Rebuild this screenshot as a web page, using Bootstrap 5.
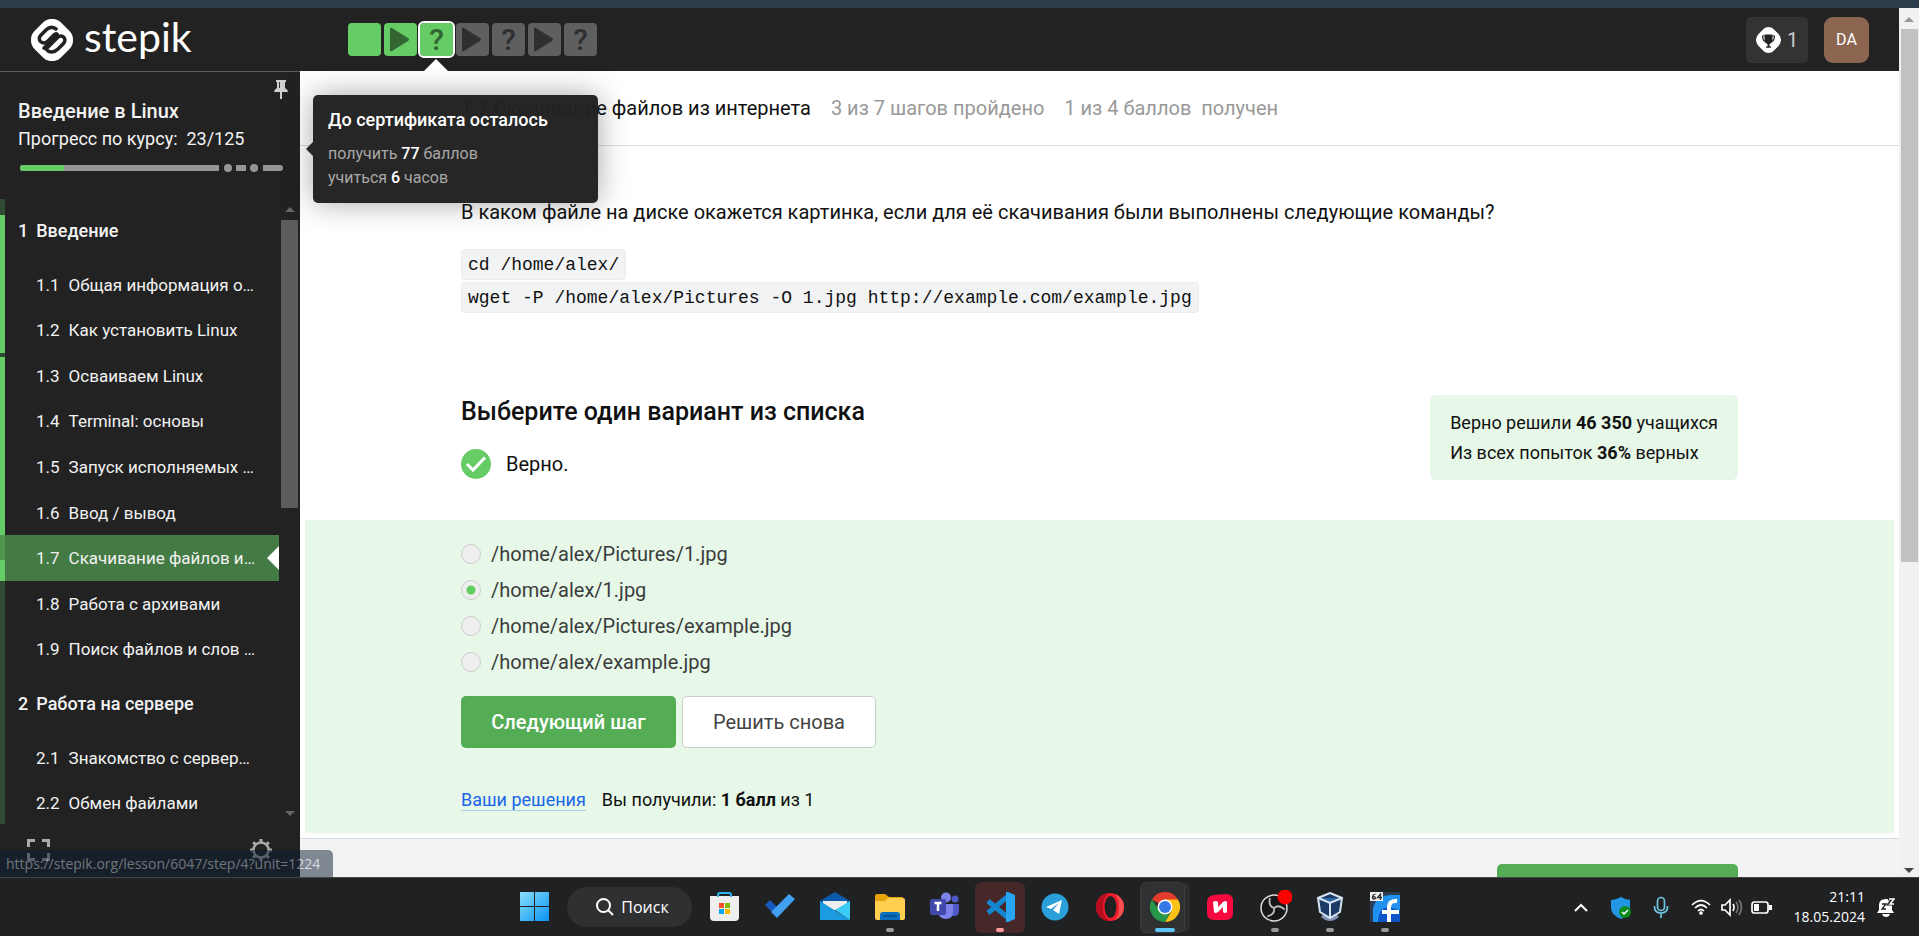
<!DOCTYPE html>
<html lang="ru">
<head>
<meta charset="utf-8">
<meta name="viewport" content="width=device-width, initial-scale=1">
<title>Скачивание файлов из интернета — Stepik</title>
<link rel="stylesheet" href="https://cdn.jsdelivr.net/npm/bootstrap@5.3.0/dist/css/bootstrap.min.css">
<style>
:root { --ink:#222; --green:#66cc66; --mint:#e7f8e8; }
body { font-family:Roboto,"Liberation Sans",sans-serif; font-size:20px; line-height:30px; color:#111; background:#fff; }
button { font-family:inherit; }
.shell { height:100vh; overflow:hidden; }
.strip { height:8px; background:#2c3c4b; }
.topbar { height:63px; background:var(--ink); padding:0 30px 0 31px; }
.brand-link { width:317px; gap:11px; color:#fff; font:400 41px/44px Lato,sans-serif; text-decoration:none; }
.brand-link span { padding-bottom:6px; }
.step-row { gap:3px; padding-top:15px; }
.step { width:33px; height:33px; border:0; border-radius:4px; padding:0; background:#5f5f5f; color:#2f2f2f; position:relative; font-size:30px; font-weight:500; line-height:33px; }
.step.done { background:var(--green); color:#336633; }
.step.now { outline:2px solid #fff; outline-offset:0; }
.step.now::after { content:""; position:absolute; left:4px; top:36px; border:12px solid transparent; border-top:0; border-bottom-color:#fff; }
.step svg { display:block; }
.badge-btn { height:46px; width:62px; border:0; border-radius:5px; background:#333; color:#ccc; gap:6px; padding:0; }
.avatar-btn { height:46px; width:45px; border:0; border-radius:9px; background:#8c6650; color:#fff; font-size:16px; padding:0; }
.vbar { width:20px; background:#f1f1f1; }
.vbar .thumb { width:17px; background:#c1c1c1; }
.vbar.upper { height:63px; padding-top:9px; gap:7px; }
.vbar.lower { padding-bottom:4px; flex:none; }
.vbar.lower .thumb { flex:0 1 491px; }
.main-row { min-height:0; position:relative; }
.side { width:300px; background:var(--ink); color:#f2f2f2; font-size:17px; border-top:1px solid #5c5c5c; flex:none; }
.side-head { height:127px; padding:25px 18px 0; position:relative; line-height:28px; flex:none; }
.side-head .course { font-size:20px; font-weight:500; }
.side-head .so-far { font-size:18px; }
.pin { position:absolute; right:12px; top:7px; border:0; background:none; padding:0; line-height:0; }
.side-nav { flex:1; min-height:0; }
.rail { width:5px; background:#314a33; padding-top:16px; gap:4px; flex:none; }
.rail i { background:var(--green); display:block; }
.rail i:first-child { height:138px; }
.rail i:last-child { height:224px; }
.toc { width:274px; min-width:0; }
.toc h2 { font-size:18px; font-weight:500; line-height:63px; margin:0; padding-left:13px; gap:8px; }
.toc .units { height:410px; }
.toc .units.rest { height:91px; }
.toc a { flex:1; gap:9px; padding:0 0 0 31px; color:#f2f2f2; text-decoration:none; white-space:nowrap; }
.toc a.cur { background:linear-gradient(#4d964d 25px,#66cc66 25px) 0 0/5px 100% no-repeat,#447a44; position:relative; margin-left:-5px; padding-left:36px; }
.toc a.cur::after { content:""; position:absolute; right:0; border:12px solid transparent; border-left:0; border-right-color:#fff; }
.sbar { width:21px; padding:8px 2px; }
.sbar .thumb { width:17px; height:288px; background:#5c5c5c; margin-top:8px; }
.side-foot { height:53px; padding:14px 28px 0 27px; flex:none; }
.side-foot button { border:0; background:none; padding:0; line-height:0; height:24px; }
.tip { position:absolute; left:313px; top:24px; width:285px; padding:10px 15px 13px; background:rgba(34,34,34,.98); border-radius:5px; color:#a8a8a8; font-size:16px; line-height:24px; box-shadow:0 0 30px rgba(0,0,0,.35); z-index:5; }
.tip::before { content:""; position:absolute; left:-7px; top:47px; border:7px solid transparent; border-left:0; border-right-color:#262626; }
.tip h3 { font-size:18px; font-weight:500; color:#fff; line-height:30px; margin:0 0 7px; }
.tip b { color:#fff; font-weight:500; }
.url-tip { position:absolute; left:0; bottom:0; height:27px; padding:0 13px 0 6px; background:rgb(12,30,50); opacity:.5; color:#bcc6d0; font:14px/27px "Open Sans",sans-serif; border-top-right-radius:5px; z-index:6; }
.content { flex:1; min-width:0; overflow:hidden; }
.wrap { max-width:1277px; margin:0 auto; width:100%; }
.lesson-head { border-bottom:1px solid #ddd; height:75px; color:#999; }
.lesson-head .wrap { gap:20px; }
.lesson-head h1 { font-size:20px; font-weight:400; color:#111; margin:0; }
.ask { padding-top:51px; }
.ask p { margin:0 0 22px; }
.ask code { display:table; height:30px; margin-bottom:2px; padding:1px 6px 0; border:1px solid #eaecee; border-radius:4px; background:#f2f3f5; color:#111; font:18px/28px "Liberation Mono",monospace; }
.verdict { padding-top:80px; height:205px; }
.verdict h2 { font-size:25px; font-weight:500; line-height:34px; margin:0 0 20px; }
.verdict .ok { gap:15px; }
.stats { background:var(--mint); border-radius:6px; padding:13px 20px 12px; font-size:18px; height:85px; }
.stats b, .links b { font-weight:700; }
.answer { background:var(--mint); margin:0 5px; padding:16px 0 18px; }
.opt { height:36px; gap:10px; color:#3c3c3c; }
.opt input { appearance:none; width:20px; height:20px; margin:0; border:1px solid #ccc; border-radius:50%; background:#eee; }
.opt input:checked { background:radial-gradient(circle, #5fcf5f 4px, #eee 5px); }
.acts { gap:6px; }
.act { height:52px; border-radius:5px; font-size:20px; padding:0; }
.go { width:215px; background:#54ad54; color:#fff; font-weight:500; border:0; }
.again { width:194px; background:#fff; color:#444; border:1px solid #ccc; }
.links { margin-top:37px; font-size:18px; gap:16px; }
.links a { color:#1a66e8; text-decoration:none; border-bottom:1px solid #a9cdec; line-height:21px; }
.foot { margin-top:5px; border-top:1px solid #d9dbde; background:#f2f3f5; padding-top:25px; height:90px; }
.foot .go { width:241px; }
.arrow { width:0; height:0; border:5px solid transparent; display:block; }
.arrow.up { border-top:0; border-bottom-color:#999; }
.arrow.dn { border-bottom:0; border-top-color:#444; }
.sbar .arrow.up { border-bottom-color:#666; }
.sbar .arrow.dn { border-top-color:#666; }
.tasks { height:59px; background:#202122; border-top:1px solid #444547; position:relative; color:#fff; flex:none; }
.tasks .app { width:55px; height:58px; border:0; background:none; padding:0; position:relative; line-height:0; }
.tasks .app::before { content:""; position:absolute; inset:4px 2px 3px 3px; border-radius:6px; }
.app svg { position:relative; }
.app.alert-on::before { background:#472829; }
.tasks .app.front::before { right:7px; background:#303132; border:1px solid #3a3b3c; box-shadow:6px 0 0 -1px #2c2d2e; }
.app.run::after { content:""; position:absolute; left:24px; bottom:4px; width:8px; height:4px; border-radius:2px; background:#999; }
.app.alert-on::after { background:#ff99a4; }
.app.front::after { left:18px; width:20px; background:#5cc4f5; }
.find { width:125px; height:40px; border:0; border-radius:20px; background:#2f3031; color:#fff; margin:0 5px; gap:7px; font:16px/20px "Open Sans",sans-serif; padding:0 0 0 6px; }
.tray { position:absolute; right:24px; top:0; height:58px; gap:12px; }
.clock { font:14px/20px "Open Sans",sans-serif; width:79px; }
</style>
</head>
<body>
<div class="shell d-flex flex-column">
  <div class="strip flex-shrink-0"></div>
  <header class="d-flex flex-shrink-0">
    <div class="topbar d-flex flex-grow-1">
      <a href="#" class="brand-link d-flex align-items-center">
        <svg width="42" height="42" viewBox="0 0 42 42"><path fill="#fff" d="M21 0c5 0 7 1.500 10 4.500l6 6c3 3 5 5.500 5 10.500s-2 7.500-5 10.500l-6 6c-3 3-5 4.500-10 4.500s-7-1.500-10-4.500l-6-6C2 28.500 0 26 0 21s2-7.500 5-10.500l6-6C14 1.500 16 0 21 0z"/><g fill="none" stroke="#222" stroke-width="3.600" stroke-linecap="round" stroke-linejoin="round"><path d="M25 10c-4-3-7-2-10 1l-5 5c-5 5 2 11 7 6l6-6c2-2 4-1 3 1L13 29"/><path d="M17 32c4 2 7 1 10-2l5-5c5-5-1-11-6-6L15 30"/></g></svg>
        <span>stepik</span>
      </a>
      <nav class="step-row d-flex align-items-start" aria-label="Шаги">
        <button class="step done" aria-label="Шаг 1"></button>
        <button class="step done" aria-label="Шаг 2"><svg width="32" height="33"><path fill="#336633" d="M6 6q0-2 2-1l16 10q2 1.500 0 3L8 28q-2 1-2-1z"/></svg></button>
        <button class="step done now">?</button>
        <button class="step" aria-label="Шаг 4"><svg width="32" height="33"><path fill="#2f2f2f" d="M6 6q0-2 2-1l16 10q2 1.500 0 3L8 28q-2 1-2-1z"/></svg></button>
        <button class="step">?</button>
        <button class="step" aria-label="Шаг 6"><svg width="32" height="33"><path fill="#2f2f2f" d="M6 6q0-2 2-1l16 10q2 1.500 0 3L8 28q-2 1-2-1z"/></svg></button>
        <button class="step">?</button>
      </nav>
      <div class="ms-auto d-flex align-items-center gap-3">
        <button class="badge-btn d-flex align-items-center justify-content-center"><svg width="25" height="26" viewBox="0 0 25 26"><path fill="#fff" d="M12.500 0q3 0 5 2l5 5q2.500 3 2.500 6t-2.500 6l-5 5q-2 2-5 2t-5-2l-5-5Q0 16 0 13t2.500-6l5-5q2-2 5-2z"/><path fill="#222" d="M8.500 7.500h8v6q-.500 3-3 3.500v2.500H15v1.200h-5v-1.200h1.500V17q-2.500-.500-3-3.500z"/><path fill="none" stroke="#222" stroke-width="1.200" d="M8.500 9H6.600q0 4.500 2.500 5.500M16.500 9h1.900q0 4.500-2.500 5.500"/></svg><span>1</span></button>
        <button class="avatar-btn">DA</button>
      </div>
    </div>
    <div class="vbar upper d-flex flex-column align-items-center"><i class="arrow up"></i><div class="thumb flex-grow-1"></div></div>
  </header>

  <div class="main-row d-flex flex-grow-1">
    <aside class="side d-flex flex-column">
      <div class="side-head">
        <button class="pin" aria-label="Закрепить"><svg width="14" height="22" viewBox="0 0 14 22"><path fill="#d0d0d0" d="M2 1h10v2h-1v6q3 1.500 3 4H8v7H6v-7H0q0-2.500 3-4V3H2z"/><path stroke="#333" d="M5.500 3v6"/></svg></button>
        <div class="course">Введение в Linux</div>
        <div class="so-far">Прогресс по курсу:&nbsp; 23/125</div>
        <svg class="d-block" width="266" height="28" viewBox="0 0 266 28"><g fill="#969696"><path d="M5 12h196v6H5a3 3 0 0 1 0-6zM218 12h10v6h-10zM245 12h17a3 3 0 0 1 0 6h-17z"/><circle cx="210" cy="15" r="4"/><circle cx="236" cy="15" r="4"/></g><path fill="#66cc66" d="M5 12h41v6H5a3 3 0 0 1 0-6z"/></svg>
      </div>
      <div class="side-nav d-flex">
        <div class="rail d-flex flex-column"><i></i><i></i></div>
        <nav class="toc">
          <h2 class="d-flex"><span>1</span><span>Введение</span></h2>
          <div class="units d-flex flex-column">
            <a href="#" class="d-flex align-items-center"><span>1.1</span><span>Общая информация о…</span></a>
            <a href="#" class="d-flex align-items-center"><span>1.2</span><span>Как установить Linux</span></a>
            <a href="#" class="d-flex align-items-center"><span>1.3</span><span>Осваиваем Linux</span></a>
            <a href="#" class="d-flex align-items-center"><span>1.4</span><span>Terminal: основы</span></a>
            <a href="#" class="d-flex align-items-center"><span>1.5</span><span>Запуск исполняемых …</span></a>
            <a href="#" class="d-flex align-items-center"><span>1.6</span><span>Ввод / вывод</span></a>
            <a href="#" class="cur d-flex align-items-center"><span>1.7</span><span>Скачивание файлов и…</span></a>
            <a href="#" class="d-flex align-items-center"><span>1.8</span><span>Работа с архивами</span></a>
            <a href="#" class="d-flex align-items-center"><span>1.9</span><span>Поиск файлов и слов …</span></a>
          </div>
          <h2 class="d-flex"><span>2</span><span>Работа на сервере</span></h2>
          <div class="units rest d-flex flex-column">
            <a href="#" class="d-flex align-items-center"><span>2.1</span><span>Знакомство с сервер…</span></a>
            <a href="#" class="d-flex align-items-center"><span>2.2</span><span>Обмен файлами</span></a>
          </div>
        </nav>
        <div class="sbar d-flex flex-column align-items-center"><i class="arrow up"></i><div class="thumb"></div><i class="arrow dn mt-auto"></i></div>
      </div>
      <div class="side-foot d-flex justify-content-between">
        <button aria-label="Во весь экран"><svg width="23" height="22"><path fill="none" stroke="#aaa" stroke-width="3" d="M1.500 8V1.500H8M15 1.500h6.500V8M21.500 14v6.500H15M8 20.500H1.500V14"/></svg></button>
        <button aria-label="Настройки"><svg width="22" height="22" viewBox="0 0 22 22" fill="none" stroke="#aaa"><circle cx="11" cy="11" r="7.500" stroke-width="2.500"/><path stroke-width="3" d="M11 0v3M11 19v3M0 11h3M19 11h3M3.200 3.200l2 2M16.800 16.800l2 2M3.200 18.800l2-2M16.800 5.200l2-2"/></svg></button>
      </div>
    </aside>

    <main class="content">
      <div class="lesson-head"><div class="wrap d-flex align-items-center h-100"><h1>1.7&nbsp;Скачивание файлов из интернета</h1><span>3 из 7 шагов пройдено</span><span>1 из 4 баллов &nbsp;получен</span></div></div>
      <div class="wrap ask">
        <p>В каком файле на диске окажется картинка, если для её скачивания были выполнены следующие команды?</p>
        <code>cd /home/alex/</code>
        <code>wget -P /home/alex/Pictures -O 1.jpg http://example.com/example.jpg</code>
      </div>
      <div class="wrap verdict d-flex justify-content-between">
        <div>
          <h2>Выберите один вариант из списка</h2>
          <div class="ok d-flex align-items-center"><svg width="30" height="30"><circle cx="15" cy="15" r="15" fill="#66cc66"/><path d="M6 15l6 6L24 8.500" fill="none" stroke="#fff" stroke-width="3"/></svg><span>Верно.</span></div>
        </div>
        <div class="stats">Верно решили <b>46 350</b> учащихся<br>Из всех попыток <b>36%</b> верных</div>
      </div>
      <form class="answer" onsubmit="return false">
        <div class="wrap">
          <label class="opt d-flex align-items-center"><input type="radio" name="path">/home/alex/Pictures/1.jpg</label>
          <label class="opt d-flex align-items-center"><input type="radio" name="path" checked>/home/alex/1.jpg</label>
          <label class="opt d-flex align-items-center"><input type="radio" name="path">/home/alex/Pictures/example.jpg</label>
          <label class="opt d-flex align-items-center"><input type="radio" name="path">/home/alex/example.jpg</label>
          <div class="acts d-flex mt-3"><button class="act go">Следующий шаг</button><button class="act again">Решить снова</button></div>
          <div class="links d-flex align-items-center"><a href="#">Ваши решения</a><span>Вы получили: <b>1 балл</b> из 1</span></div>
        </div>
      </form>
      <div class="foot"><div class="wrap d-flex justify-content-end"><button class="act go" aria-label="Следующий шаг"></button></div></div>
    </main>
    <div class="vbar lower d-flex flex-column align-items-center justify-content-between"><div class="thumb"></div><i class="arrow dn"></i></div>

    <div class="tip" role="tooltip"><h3>До сертификата осталось</h3>получить <b>77</b> баллов<br>учиться <b>6</b> часов</div>
    <div class="url-tip">https://stepik.org/lesson/6047/step/4?unit=1224</div>
  </div>

  <footer class="tasks d-flex justify-content-center align-items-center">
    <button class="app" aria-label="Пуск"><svg width="30" height="30"><defs><linearGradient id="w" x2="1" y2="1"><stop stop-color="#8ae0fb"/><stop offset="1" stop-color="#0a93f5"/></linearGradient></defs><path fill="url(#w)" d="M0 0h14v14H0zM15 0h14v14H15zM0 15h14v14H0zM15 15h14v14H15z"/></svg></button>
    <button class="find d-flex align-items-center justify-content-center"><svg width="18" height="18" fill="none" stroke="#fff" stroke-width="2"><circle cx="7.500" cy="7.500" r="6.500"/><path d="M12 12l5 5"/></svg>Поиск</button>
    <button class="app" aria-label="Store"><svg width="30" height="30"><path fill="#eee" d="M0 4h29v21q0 4-4 4H4q-4 0-4-4z"/><path fill="#f25022" d="M9 11h5v5H9z"/><path fill="#7fba00" d="M15 11h5v5h-5z"/><path fill="#00a4ef" d="M9 17h5v5H9z"/><path fill="#ffb900" d="M15 17h5v5h-5z"/><path d="M8 5V3q0-2 2-2h9q2 0 2 2v2" fill="none" stroke="#29b6f0" stroke-width="2"/></svg></button>
    <button class="app" aria-label="To Do"><svg width="30" height="30"><path fill="#185abd" d="M0 13l5-5 7 7-1 9z"/><path fill="#41a0f0" d="M6 20L24 2l6 5-18 19z"/></svg></button>
    <button class="app" aria-label="Почта"><svg width="30" height="30"><path fill="#0a5bab" d="M0 9L15 0l15 9v6H0z"/><path fill="#eee" d="M3 9h24v9H3z"/><path fill="#1c9be0" d="M0 9l30 19H0z"/><path fill="#3bcbf4" d="M30 9v19L15 18z"/></svg></button>
    <button class="app run" aria-label="Проводник"><svg width="30" height="30"><path fill="#e8a20c" d="M0 4q0-2 2-2h8l4 3h14v8H0z"/><path fill="#ffd04f" d="M0 9h10l3-3h15q2 0 2 2v18q0 2-2 2H2q-2 0-2-2z"/><path fill="#0a70bd" d="M5 28v-5q0-3 3-3h14q3 0 3 3v5z"/><path stroke="#054a85" d="M8 24h14" stroke-width="1.500"/></svg></button>
    <button class="app" aria-label="Teams"><svg width="30" height="30"><circle cx="25" cy="7" r="3.500" fill="#5059c9"/><circle cx="16" cy="5.500" r="5" fill="#7b83eb"/><path fill="#5059c9" d="M20 12h9v7q0 5-5 5h-4z"/><path fill="#7b83eb" d="M8 12h15v8q0 7-7 7t-8-7z"/><rect y="7" width="16" height="16" rx="2" fill="#4048aa"/><path fill="none" stroke="#fff" stroke-width="2.500" d="M4.500 11h7M8 11v8"/></svg></button>
    <button class="app alert-on run" aria-label="VS Code"><svg width="30" height="30"><path fill="none" stroke="#1685cf" stroke-width="5" stroke-linejoin="round" d="M22 5L3 21M3 9l19 16"/><path fill="#27a5f2" d="M21 0h2l7 3v24l-7 3h-2z"/></svg></button>
    <button class="app" aria-label="Telegram"><svg width="28" height="28"><circle cx="14" cy="14" r="13.500" fill="#2a9fda"/><path fill="#fff" d="M5 14L21 7l-3 14-6-4 6-7-8 6z"/></svg></button>
    <button class="app" aria-label="Opera"><svg width="30" height="30"><ellipse cx="15" cy="15" rx="14" ry="14" fill="#f01c2c"/><path fill="#b60e1e" d="M15 29A14 14 0 0 1 15 1q-7 3-7 14t7 14"/><path fill="#f75050" d="M20 2q9 4 9 13t-9 13q4-5 4-13T20 2"/><ellipse cx="15.500" cy="15" rx="6" ry="11" fill="#202122"/></svg></button>
    <button class="app front run" aria-label="Chrome"><svg width="30" height="30"><path fill="#e33b2e" d="M15 15L2 7.500A15 15 0 0 1 28 7.500z"/><path fill="#fbc116" d="M15 7.500h13A15 15 0 0 1 15 30l6.500-11z"/><path fill="#279847" d="M2 7.500A15 15 0 0 0 15 30l6-11-12-1z"/><circle cx="15" cy="15" r="7.500" fill="#fff"/><circle cx="15" cy="15" r="6" fill="#3579e8"/></svg></button>
    <button class="app" aria-label="Приложение"><svg width="26" height="26"><path fill="#f5093f" d="M7 1l12-1q7 0 7 7v12q0 7-7 7H7q-7 0-7-7V8q0-6 7-7z"/><path fill="#fff" d="M6 8q3-2 5 0v5l5-5q3-2 4 0v10q-2 2-4 0v-5l-5 5q-3 2-4 0z"/></svg></button>
    <button class="app run" aria-label="OBS"><svg width="34" height="34" viewBox="-2 -3 34 34"><circle cx="14" cy="15" r="13" fill="#171717" stroke="#ddd" stroke-width="1.500"/><g fill="none" stroke="#bbb" stroke-width="1.800"><path id="o" d="M14 15q-6-2-4-10"/><path d="M14 15q-6-2-4-10" transform="rotate(120 14 15)"/><path d="M14 15q-6-2-4-10" transform="rotate(240 14 15)"/></g><circle cx="25" cy="4" r="7.500" fill="#f00"/></svg></button>
    <button class="app run" aria-label="VirtualBox"><svg width="28" height="30"><path fill="#7f91b8" d="M9 20h10l4 5q-9 8-18 0z"/><path fill="#1b3a66" stroke="#d5e2ef" stroke-width="2" d="M14 1l12 5-2 14-10 6-10-6L2 6z"/><path fill="#2f66a5" stroke="#d5e2ef" stroke-width="2" d="M2 6l12 5 12-5M14 11v15"/></svg></button>
    <button class="app run" aria-label="Редактор"><svg width="30" height="30"><path fill="#2b3c55" d="M0 0h30v30H0z"/><path fill="#2191f0" d="M3 30V17Q5 4 20 3h10v27z"/><path fill="#0b55c9" d="M8 30q0-13 10-15l12 3v12z"/><path fill="none" stroke="#fff" stroke-width="4" d="M27 9q-8-1-8 7v14M12 20h17"/><path fill="#eee" d="M0 0h13v9H0z"/><path fill="none" stroke="#333" stroke-width="1.300" d="M5.500 2Q2 3 2.500 6q1.500 2 3 0-.500-2-2.500-1M10.500 8V2L7.500 5.500H12"/></svg></button>
    <div class="tray d-flex align-items-center">
      <svg width="200" height="30" viewBox="0 0 200 30" fill="none" stroke="#fff" stroke-width="2"><path d="M1 19l6-6 6 6"/><path fill="#2196e3" stroke="none" d="M37 8q5 0 10-3 5 3 9 3v8q0 7-9 11-10-4-10-11z"/><circle cx="51" cy="20" r="6" fill="#0a8a1a" stroke="none"/><path stroke-width="1.500" d="M48 20l2 2 4-4"/><g stroke="#6fc3e0" stroke-width="1.700"><rect x="83.500" y="5.500" width="7" height="13" rx="3.500"/><path d="M80.500 14v1q0 6 6.500 6t6.500-6v-1M87 21v5"/></g><g stroke-width="1.700"><path d="M118 13q9-9 18 0M121 16q6-6 12 0M124 19q3-3 6 0"/><circle cx="127" cy="21" r="1"/><path d="M148 13h3l5-5v15l-5-5h-3zM159 12q2 3 0 7"/><path stroke="#777" d="M162 10q4 5 0 11M165 8q5 7 0 15"/><rect x="178" y="10" width="16" height="11" rx="2.500"/></g><path stroke="none" fill="#fff" d="M180 12h5v7h-5zM195 13h3v5h-3z"/></svg>
      <div class="clock text-end">21:11<br>18.05.2024</div>
      <svg width="18" height="20" viewBox="0 0 18 20"><path fill="#fff" d="M2 8q0-6 7-6 5 0 6 4v7l2 3H0l2-3zM5 17h8q-1 3-4 3t-4-3z"/><path fill="none" stroke="#202122" stroke-width="1.300" d="M5 7h4l-4 5h4"/><path fill="none" stroke="#202122" stroke-width="3" d="M11 2h5l-4 5h4"/><path fill="none" stroke="#fff" stroke-width="1.500" d="M12 2h5l-4 5h4"/></svg>
    </div>
  </footer>
</div>
<script src="https://cdn.jsdelivr.net/npm/bootstrap@5.3.0/dist/js/bootstrap.bundle.min.js"></script>
</body>
</html>
